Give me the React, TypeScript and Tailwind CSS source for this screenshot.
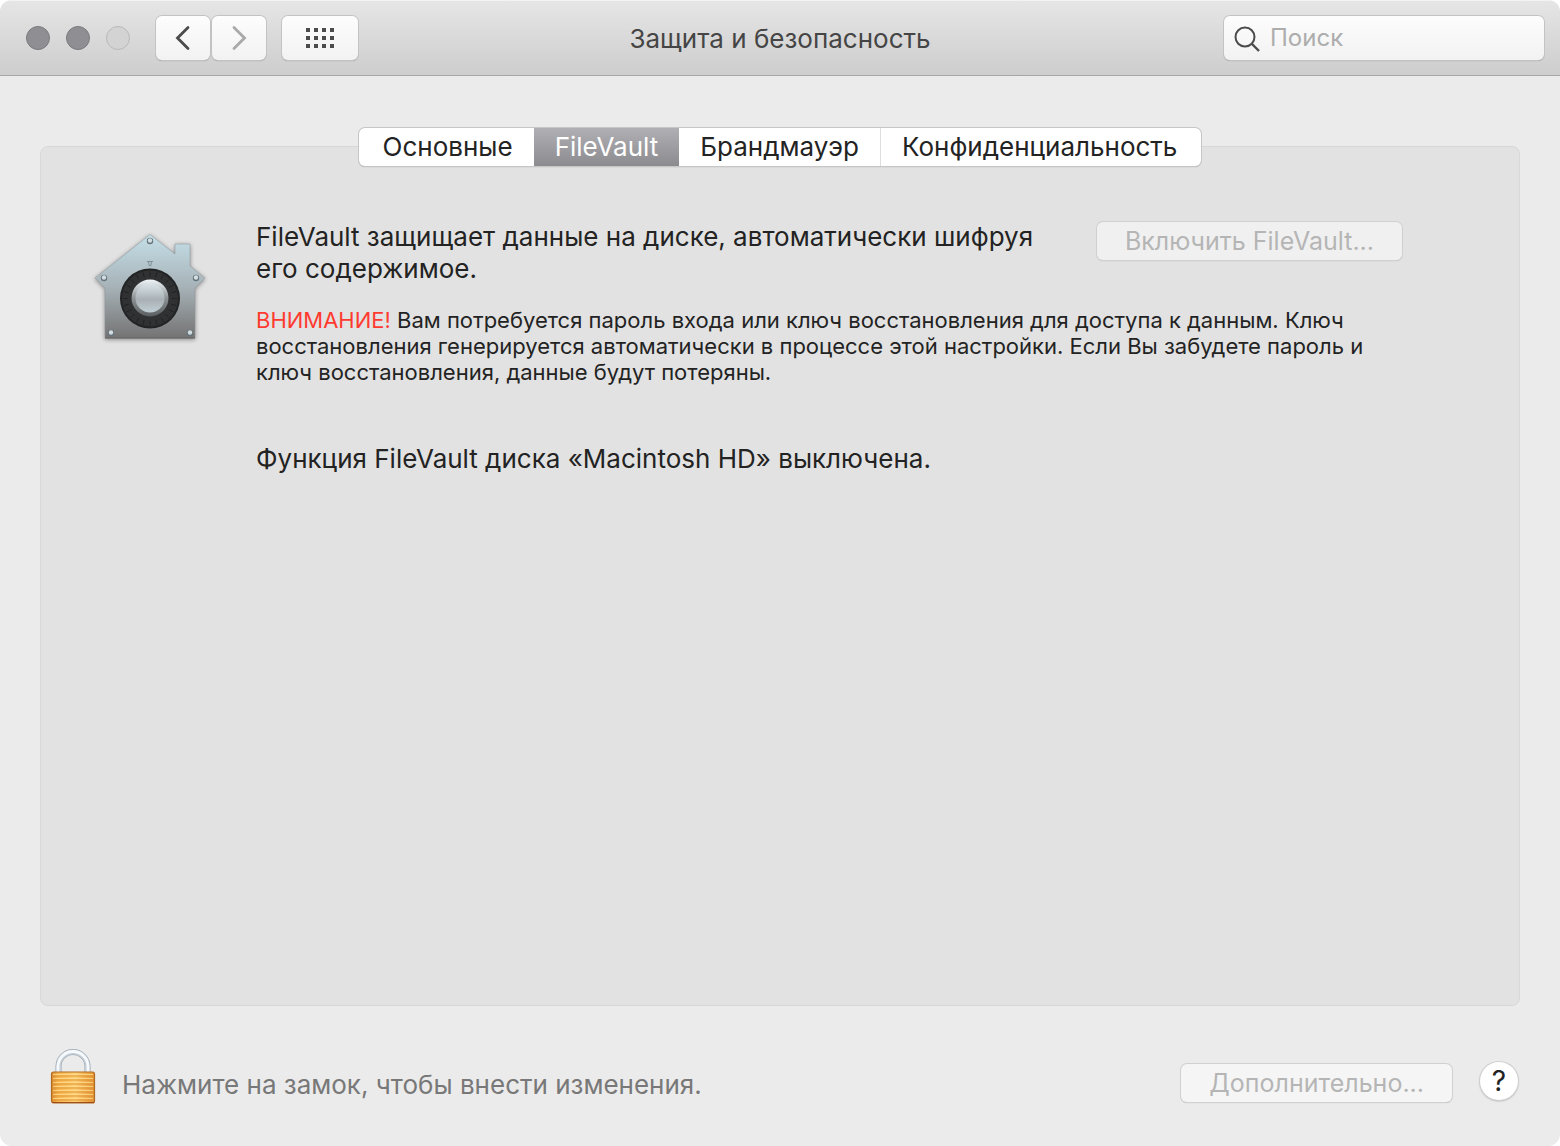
import { useState } from 'react'

const tabs = ['Основные', 'FileVault', 'Брандмауэр', 'Конфиденциальность']

const gridDots = [0, 1, 2].flatMap((row) => [0, 1, 2, 3].map((col) => ({ row, col })))

const ticks = Array.from({ length: 24 }, (_, i) => i * 15)

const rivets = [
  [56, 8],
  [10, 45],
  [102, 45],
  [17, 100],
  [96, 100],
]

function TrafficLights() {
  return (
    <div className="flex gap-4">
      <button aria-label="Закрыть" className="size-6 rounded-full border border-[#7b7a7e] bg-[#8f8e93]" />
      <button aria-label="Свернуть" className="size-6 rounded-full border border-[#7b7a7e] bg-[#8f8e93]" />
      <button aria-label="Развернуть" disabled className="size-6 rounded-full border border-[#b9b9b9] bg-[#d3d3d3]" />
    </div>
  )
}

function Toolbar() {
  const button =
    'flex h-11 items-center justify-center rounded-md bg-linear-to-b from-[#fdfdfd] to-[#f2f2f2] shadow-[0_0_0_1px_#c3c3c3,0_1px_1px_0_#858585]'

  return (
    <header className="grid grid-cols-[1fr_auto_1fr] items-center border-b border-[#a5a5a5] bg-linear-to-b from-[#e6e6e6] to-[#cdcdcd] px-4 pt-4 pb-[15px] shadow-[inset_0_1px_0_#f3f3f3]">
      <div className="flex items-center pl-2.5">
        <TrafficLights />
        <div className="ml-[26px] flex gap-0.5">
          <button aria-label="Назад" className={`${button} w-[54px]`}>
            <svg width="16" height="26" viewBox="0 0 16 26" fill="none" stroke="#4b4b4b" strokeWidth="2.8" strokeLinecap="round">
              <path d="M13 2.500 2.500 13 13 23.500" />
            </svg>
          </button>
          <button aria-label="Вперед" disabled className={`${button} w-[54px]`}>
            <svg width="16" height="26" viewBox="0 0 16 26" fill="none" stroke="#a9a9a9" strokeWidth="2.8" strokeLinecap="round">
              <path d="M3 2.500 13.500 13 3 23.500" />
            </svg>
          </button>
        </div>
        <button aria-label="Показать все" className={`${button} ml-4 w-[76px]`}>
          <svg width="28" height="20" viewBox="0 0 28 20" fill="#4b4b4b">
            {gridDots.map(({ row, col }) => (
              <rect key={`${row}-${col}`} x={col * 8} y={row * 8} width="4" height="4" />
            ))}
          </svg>
        </button>
      </div>

      <h1 className="pt-0.5 text-[26px] leading-8 text-[#454545]">Защита и безопасность</h1>

      <label className={`${button} w-80 justify-self-end px-2.5`}>
        <svg className="shrink-0" width="28" height="28" viewBox="0 0 28 28" fill="none" stroke="#4b4b4b" strokeWidth="2">
          <circle cx="11" cy="13" r="9.5" />
          <path d="m18 20 7 7" strokeWidth="2.4" />
        </svg>
        <input
          type="search"
          aria-label="Поиск"
          placeholder="Поиск"
          className="ml-2 w-full min-w-0 bg-transparent text-2xl outline-none placeholder:text-[#adadad]"
        />
      </label>
    </header>
  )
}

function FileVaultIcon() {
  return (
    <svg width="112" height="112" viewBox="0 0 112 112" className="overflow-visible drop-shadow-[0_1px_2px_rgba(0,0,0,0.4)]">
      <defs>
        <linearGradient id="house" x1="0" y1="0" x2="0" y2="1">
          <stop offset="0" stopColor="#c5dfe8" />
          <stop offset="0.5" stopColor="#a7b3b8" />
          <stop offset="1" stopColor="#747373" />
        </linearGradient>
        <linearGradient id="knobRim" x1="0" y1="0" x2="0" y2="1">
          <stop offset="0" stopColor="#f0f6f9" />
          <stop offset="0.5" stopColor="#8d9295" />
          <stop offset="1" stopColor="#5a5e61" />
        </linearGradient>
        <linearGradient id="knob" x1="0" y1="0" x2="0" y2="1">
          <stop offset="0" stopColor="#dbe5e9" />
          <stop offset="0.55" stopColor="#a9b1b5" />
          <stop offset="1" stopColor="#c0ced4" />
        </linearGradient>
      </defs>
      <path
        d="M56 1.500 81 21V11h15v22l15 12-10 10v50H11V55L1 45Z"
        fill="url(#house)"
        stroke="#8c979b"
        strokeWidth="0.500"
        strokeLinejoin="round"
      />
      <path d="M11 105h90" stroke="#5c5c5c" />
      <path d="M53 28.500h6m-4.500 0 .5 4h2l.5-4" fill="none" stroke="#75848b" strokeWidth="0.800" />
      {rivets.map(([cx, cy]) => (
        <g key={`${cx}-${cy}`}>
          <circle cx={cx} cy={cy} r="3.200" fill="#65727a" />
          <circle cx={cx} cy={cy - 0.5} r="2.200" fill="#d3dde1" />
        </g>
      ))}
      <circle cx="56" cy="65.500" r="30" fill="#222324" />
      <circle cx="56" cy="65.500" r="28" fill="#303132" />
      {ticks.map((angle) => (
        <path key={angle} d="M56 38.500v5" stroke="#1d1e20" strokeWidth="0.800" transform={`rotate(${angle} 56 65.500)`} />
      ))}
      <circle cx="56" cy="65" r="18.500" fill="url(#knobRim)" />
      <circle cx="56" cy="65" r="14.500" fill="url(#knob)" />
    </svg>
  )
}

function LockIcon() {
  return (
    <svg width="46" height="56" viewBox="0 0 46 56">
      <defs>
        <linearGradient id="brass" x1="0" y1="0" x2="1" y2="0">
          <stop offset="0" stopColor="#d9892a" />
          <stop offset="0.15" stopColor="#f6b550" />
          <stop offset="0.55" stopColor="#ffd277" />
          <stop offset="1" stopColor="#e2912f" />
        </linearGradient>
      </defs>
      <path d="M8.500 25V18.500a14.500 14.500 0 0 1 29 0V25" fill="none" stroke="#98a2aa" strokeWidth="6" />
      <path d="M8.500 25V18.500a14.500 14.500 0 0 1 29 0V25" fill="none" stroke="#c3ced7" strokeWidth="5" />
      <path d="M8 25V18.500a15 15 0 0 1 30 0V25" fill="none" stroke="#f7fafd" strokeWidth="2.800" />
      <rect x="1.500" y="24" width="43" height="31" rx="2" fill="url(#brass)" stroke="#b06a22" strokeWidth="1.200" />
      {[28, 32, 36, 40, 44, 48, 52].map((y) => (
        <g key={y}>
          <path d={`M2 ${y}h42`} stroke="#e09336" strokeWidth="1.200" />
          <path d={`M3 ${y - 1.5}h40`} stroke="#ffdc8c" strokeWidth="0.800" />
        </g>
      ))}
      <path d="M2 54.500h42" stroke="#a04c18" />
    </svg>
  )
}

function Tabs() {
  const [active, setActive] = useState('FileVault')

  return (
    <div
      role="tablist"
      className="z-10 -mb-5 flex self-center overflow-hidden rounded-md bg-white shadow-[0_0_0_1px_#c6c6c6,0_1px_1px_0_#909090]"
    >
      {tabs.map((tab) => (
        <button
          key={tab}
          role="tab"
          aria-selected={tab === active}
          onClick={() => setActive(tab)}
          className={
            tab === active
              ? 'bg-linear-to-b from-[#b0afb4] to-[#8c8b90] px-[21px] text-[26px] leading-[38px] text-white'
              : 'border-r border-[#dedede] px-[21px] text-[26px] leading-[38px] first:border-r-0 first:pl-6 last:border-r-0 last:pr-6'
          }
        >
          {tab}
        </button>
      ))}
    </div>
  )
}

export default function App() {
  const disabledButton =
    'shrink-0 rounded-md px-7 text-[25px] leading-[38px] text-[#b5b5b5] shadow-[0_0_0_1px_#d0d0d0,0_1px_1px_0_#b0b0b0]'

  return (
    <div className="flex min-h-screen flex-col overflow-hidden rounded-xl bg-[#ebebeb] font-['Inter','Liberation_Sans',sans-serif] text-[#232323]">
      <Toolbar />

      <main className="flex flex-1 flex-col px-10 pt-[52px]">
        <Tabs />
        <section className="flex flex-1 items-start gap-[50px] rounded-lg border border-[#d8d8d8] bg-[#e2e2e2] pt-[74px] pr-[117px] pl-[53px]">
          <div className="shrink-0 pt-3">
            <FileVaultIcon />
          </div>
          <div className="flex-1">
            <div className="flex items-start justify-between gap-12">
              <p className="text-[26px] leading-8">
                FileVault защищает данные на диске, автоматически шифруя его содержимое.
              </p>
              <button disabled className={`${disabledButton} mt-px bg-[#f0f0f0]`}>
                Включить FileVault...
              </button>
            </div>
            <p className="mt-[22px] text-[22px] leading-[26px]">
              <span className="text-[#ff3b30]">ВНИМАНИЕ!</span> Вам потребуется пароль входа или ключ восстановления для
              доступа к данным. Ключ восстановления генерируется автоматически в процессе этой настройки. Если Вы
              забудете пароль и ключ восстановления, данные будут потеряны.
            </p>
            <p className="mt-[58px] text-[26px] leading-8">Функция FileVault диска «Macintosh HD» выключена.</p>
          </div>
        </section>
      </main>

      <footer className="flex items-center pt-[42px] pr-[42px] pb-[42px] pl-[50px]">
        <button aria-label="Снять защиту">
          <LockIcon />
        </button>
        <p className="ml-[26px] pt-[18px] text-[26px] leading-8 text-[#787878]">
          Нажмите на замок, чтобы внести изменения.
        </p>
        <button disabled className={`${disabledButton} mt-3.5 ml-auto bg-[#f5f5f5]`}>
          Дополнительно...
        </button>
        <button
          aria-label="Справка"
          className="mt-2.5 ml-7 size-[38px] rounded-full bg-white text-[28px] leading-[38px] shadow-[0_0_0_1px_#cfcfcf,0_1px_2px_0_#909090]"
        >
          ?
        </button>
      </footer>
    </div>
  )
}
